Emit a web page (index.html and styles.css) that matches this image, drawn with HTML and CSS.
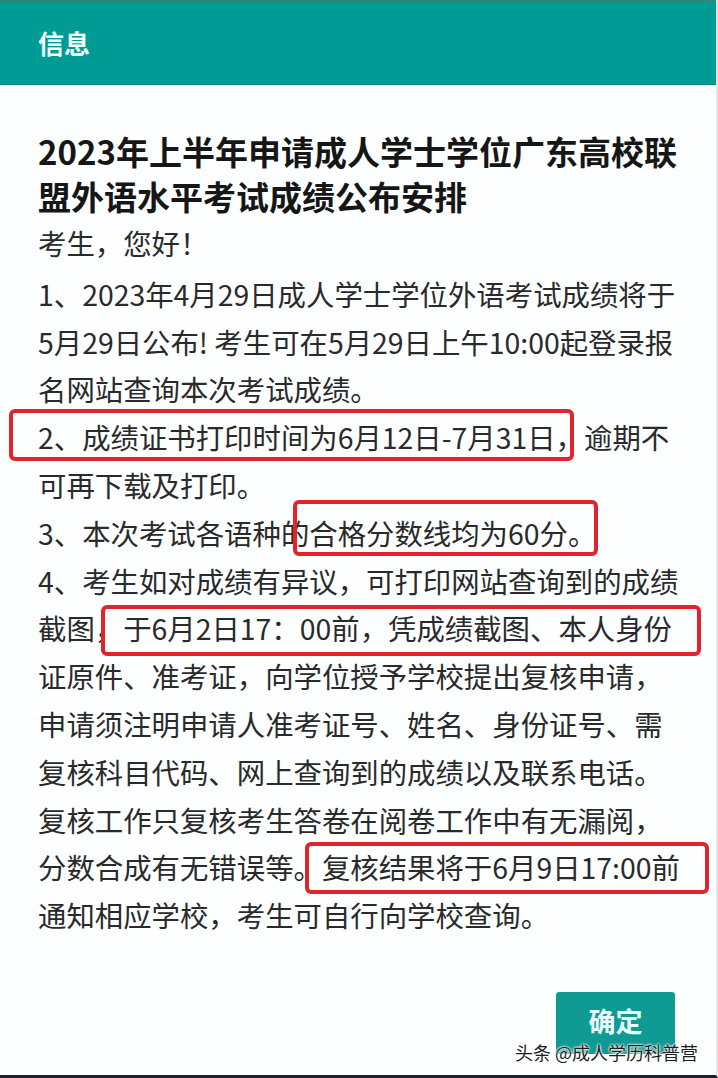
FILE: index.html
```html
<!DOCTYPE html>
<html lang="zh-CN">
<head>
<meta charset="utf-8">
<title>信息</title>
<link rel="stylesheet" href="styles.css">
</head>
<body>
<div class="dialog">
  <header class="dialog-header">信息</header>
  <main class="dialog-body">
    <h1 class="title">2023年上半年申请成人学士学位广东高校联<br>盟外语水平考试成绩公布安排</h1>
    <p class="greet">考生，您好！</p>
    <p class="para">1、2023年4月29日成人学士学位外语考试成绩将于<br>5月29日公布! 考生可在5月29日上午10:00起登录报<br>名网站查询本次考试成绩。</p>
    <p class="para">2、成绩证书打印时间为6月12日-7月31日，逾期不<br>可再下载及打印。</p>
    <p class="para">3、本次考试各语种的合格分数线均为60分。</p>
    <p class="para">4、考生如对成绩有异议，可打印网站查询到的成绩<br>截图，于6月2日17：00前，凭成绩截图、本人身份<br>证原件、准考证，向学位授予学校提出复核申请，<br>申请须注明申请人准考证号、姓名、身份证号、需<br>复核科目代码、网上查询到的成绩以及联系电话。<br>复核工作只复核考生答卷在阅卷工作中有无漏阅，<br>分数合成有无错误等。复核结果将于6月9日17:00前<br>通知相应学校，考生可自行向学校查询。</p>
  </main>
  <footer class="dialog-footer">
    <button class="ok-btn">确定</button>
  </footer>
  <span class="mark mark-1"></span>
  <span class="mark mark-2"></span>
  <span class="mark mark-3"></span>
  <span class="mark mark-4"></span>
  <span class="watermark">头条 @成人学历科普营</span>
</div>
</body>
</html>
```
FILE: styles.css
```css
html, body {
  margin: 0;
  padding: 0;
  background: #ffffff;
}

.dialog {
  position: relative;
  width: 718px;
  height: 1078px;
  box-sizing: border-box;
  background: #fdfeff;
  border-right: 2px solid #e4e6e8;
  border-bottom: 3px solid #1c2434;
  overflow: hidden;
  font-family: "Noto Sans CJK SC", "Noto Sans", sans-serif;
}

.dialog-header {
  height: 85px;
  box-sizing: border-box;
  border-top: 2px solid #3d7f7a;
  border-bottom: 1px solid #0d8a83;
  background: #009b94;
  color: #f4ffff;
  font-size: 26px;
  font-weight: 700;
  line-height: 82px;
  padding-left: 38px;
}

.dialog-body {
  padding: 44px 0 0 38px;
  color: #2a2a2a;
}

.title {
  margin: 0;
  font-size: 33px;
  font-weight: 700;
  line-height: 45px;
  color: #161616;
  white-space: nowrap;
}

.greet,
.para {
  margin: 0;
  font-size: 28.4px;
  line-height: 47.8px;
  white-space: nowrap;
}

.greet {
  margin-bottom: 3px;
}

.dialog-footer {
  display: flex;
  justify-content: flex-end;
  padding-right: 41px;
  margin-top: 53px;
}

.ok-btn {
  width: 119px;
  height: 62px;
  border: none;
  border-radius: 3px;
  background: #0f9a93;
  color: #eaffff;
  font-family: "Noto Sans CJK SC", sans-serif;
  font-size: 27px;
  font-weight: 700;
  line-height: 30px;
  padding: 0 0 4px;
}

.mark {
  position: absolute;
  border: 4px solid #e0242a;
  border-radius: 6px;
  box-sizing: border-box;
}

.mark-1 { left: 9px;   top: 409px; width: 565px; height: 52px; }
.mark-2 { left: 293px; top: 500px; width: 305px; height: 56px; }
.mark-3 { left: 101px; top: 605px; width: 600px; height: 51px; }
.mark-4 { left: 305px; top: 842px; width: 404px; height: 52px; }

.watermark {
  position: absolute;
  left: 515px;
  top: 1039px;
  font-family: "Noto Sans CJK SC", sans-serif;
  font-size: 18px;
  line-height: 26px;
  color: #1e1e1e;
  white-space: nowrap;
  text-shadow: 0 0 2px #ffffff, 0 0 2px #ffffff, 0 0 3px #ffffff;
}
```
